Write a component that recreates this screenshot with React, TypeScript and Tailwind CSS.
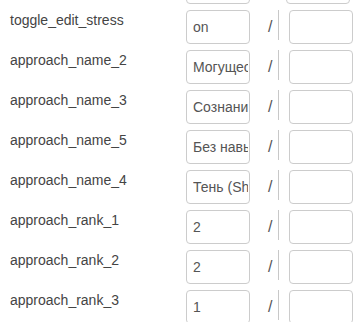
import React from "react";

// field rows (first one sits above the viewport, scrolled away)
const rows = [
  { label: "", value: "", hidden: true },
  { label: "toggle_edit_stress", value: "on" },
  { label: "approach_name_2", value: "Могущество" },
  { label: "approach_name_3", value: "Сознание" },
  { label: "approach_name_5", value: "Без навыков" },
  { label: "approach_name_4", value: "Тень (Shadow)" },
  { label: "approach_rank_1", value: "2" },
  { label: "approach_rank_2", value: "2" },
  { label: "approach_rank_3", value: "1" },
];

const inputCls =
  "w-[64px] h-[34px] shrink-0 rounded-[4px] border border-[#ccc] bg-white pl-[6px] pr-[1px] text-[14px] text-[#555] outline-none";

const App = () => {
  return (
    <div
      className="w-[360px] h-[322px] overflow-hidden bg-white"
      style={{ fontFamily: '"Liberation Sans", Arial, sans-serif' }}
    >
      <div className="-mt-[30px] px-[10px]">
        {rows.map((row, i) => (
          <div key={i} className="flex items-start h-[40px]">
            <div className="w-[176px] shrink-0 text-[14px] leading-[20px] text-[#444]">
              {row.label}
            </div>
            <input className={inputCls} defaultValue={row.value} readOnly />
            <span className="ml-[18px] w-[4px] h-[34px] leading-[34px] text-[16px] text-[#555]">
              {row.hidden ? "" : "/"}
            </span>
            <div className="ml-[6px] w-px h-[30px] shrink-0 bg-[#c8c8c8]" />
            <input className={`${inputCls} ml-[10px]`} defaultValue="" readOnly />
          </div>
        ))}
      </div>
    </div>
  );
};

export default App;
